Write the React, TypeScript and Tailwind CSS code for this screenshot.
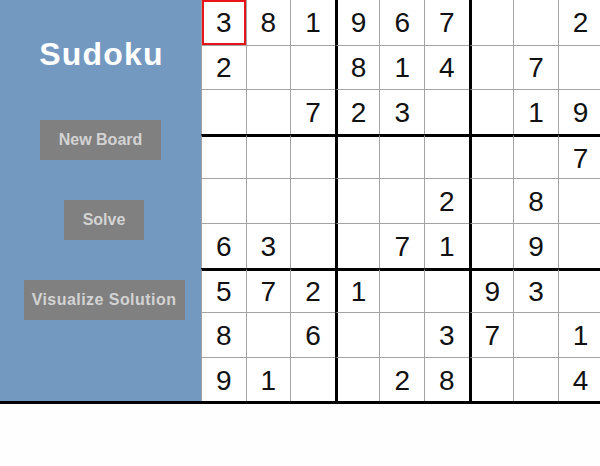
import React from "react";

const board: number[][] = [
  [3, 8, 1, 9, 6, 7, 0, 0, 2],
  [2, 0, 0, 8, 1, 4, 0, 7, 0],
  [0, 0, 7, 2, 3, 0, 0, 1, 9],
  [0, 0, 0, 0, 0, 0, 0, 0, 7],
  [0, 0, 0, 0, 0, 2, 0, 8, 0],
  [6, 3, 0, 0, 7, 1, 0, 9, 0],
  [5, 7, 2, 1, 0, 0, 9, 3, 0],
  [8, 0, 6, 0, 0, 3, 7, 0, 1],
  [9, 1, 0, 0, 2, 8, 0, 0, 4],
];

const buttonClass =
  "h-10 bg-[#808080] text-[16px] font-bold text-[#d3d3d3] flex items-center justify-center whitespace-nowrap";

function Cell({ value, row, col }: { value: number; row: number; col: number }) {
  const left =
    col === 3 || col === 6 ? "border-l-[3px] border-l-black" : "border-l border-l-[#a3a3a3]";
  const top =
    row === 0
      ? "border-t-0"
      : row === 3 || row === 6
        ? "border-t-[3px] border-t-black"
        : "border-t border-t-[#a3a3a3]";
  const selected = row === 0 && col === 0;
  return (
    <div
      className={`relative flex items-center justify-center bg-white pt-[2px] text-[28px] leading-none text-[#111] ${left} ${top}`}
    >
      {value ? value : ""}
      {selected ? <div className="absolute inset-0 border-2 border-[#e8141a]" /> : null}
    </div>
  );
}

export default function App() {
  return (
    <div
      className="h-[466px] w-[600px] overflow-hidden bg-[#fefefe]"
      style={{ fontFamily: '"Liberation Sans", Arial, sans-serif' }}
    >
      <div className="flex border-b-[3px] border-black">
        <div className="flex w-[201px] shrink-0 flex-col items-center bg-[#7399c1]">
          <h1 className="mt-[36px] pl-[2px] text-[32px] font-bold leading-[36px] tracking-[1.2px] text-white">
            Sudoku
          </h1>
          <button className={`${buttonClass} mt-[48px] w-[121px]`}>New Board</button>
          <button className={`${buttonClass} mt-10 ml-[7px] w-[80px]`}>Solve</button>
          <button className={`${buttonClass} mt-10 ml-[7px] w-[161px] tracking-[0.45px]`}>
            Visualize Solution
          </button>
        </div>
        <div className="grid shrink-0 grid-cols-[repeat(9,44.6px)] grid-rows-[repeat(9,44.6px)]">
          {board.map((r, ri) =>
            r.map((v, ci) => <Cell key={`${ri}-${ci}`} value={v} row={ri} col={ci} />)
          )}
        </div>
      </div>
    </div>
  );
}
